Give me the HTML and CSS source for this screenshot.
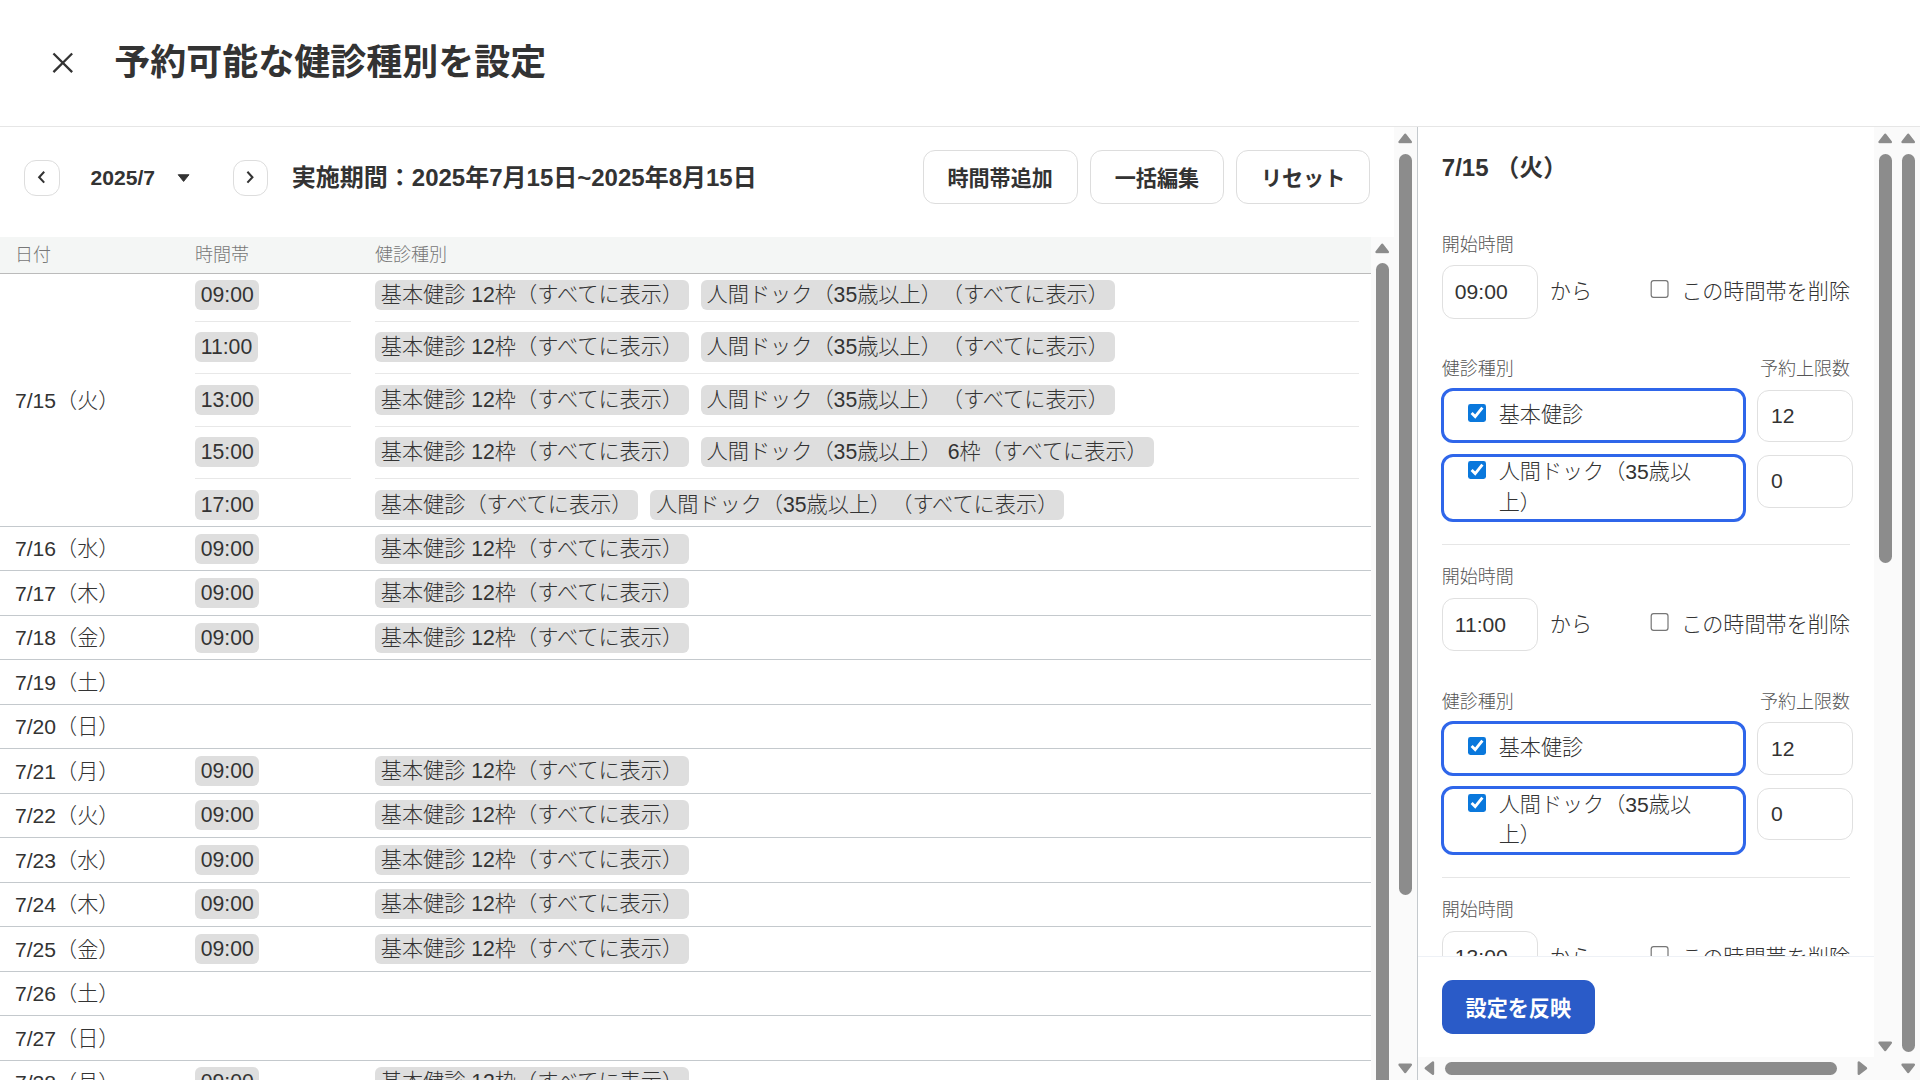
FILE: index.html
```html
<!DOCTYPE html>
<html lang="ja">
<head>
<meta charset="utf-8">
<title>予約可能な健診種別を設定</title>
<link rel="stylesheet" href="styles.css">
</head>
<body>
<svg class="defs" width="0" height="0" aria-hidden="true">
  <symbol id="tri-up" viewBox="0 0 12 9"><path d="M6 1.5 10.7 7.5H1.3Z"/></symbol>
  <symbol id="tri-down" viewBox="0 0 12 9"><path d="M6 7.5 10.7 1.5H1.3Z"/></symbol>
  <symbol id="tri-left" viewBox="0 0 9 12"><path d="M1.5 6 7.5 1.3V10.7Z"/></symbol>
  <symbol id="tri-right" viewBox="0 0 9 12"><path d="M7.5 6 1.5 1.3V10.7Z"/></symbol>
</svg>
<div class="page">
  <header class="top-bar">
    <svg class="close-icon" viewBox="0 0 18 18"><path d="M1.2 1.2 16.8 16.8M16.8 1.2 1.2 16.8"/></svg>
    <h1 class="page-title">予約可能な健診種別を設定</h1>
  </header>
  <div class="body">
    <section class="left">
      <div class="left-main">
        <div class="toolbar">
          <button class="nav-btn" type="button"><svg class="chev" viewBox="0 0 8 12"><path d="M6 1.5 1.8 6 6 10.5"/></svg></button>
          <div class="month"><span>2025/7</span><svg class="caret" viewBox="0 0 11 7"><path d="M1 .6h9L5.5 6.2Z"/></svg></div>
          <button class="nav-btn" type="button"><svg class="chev" viewBox="0 0 8 12"><path d="M2 1.5 6.2 6 2 10.5"/></svg></button>
          <div class="period">実施期間：2025年7月15日~2025年8月15日</div>
          <div class="actions">
            <button class="btn" type="button">時間帯追加</button>
            <button class="btn" type="button">一括編集</button>
            <button class="btn" type="button">リセット</button>
          </div>
        </div>
        <div class="table-wrap">
          <div class="table">
            <div class="thead"><div class="th-date">日付</div><div class="th-time">時間帯</div><div class="th-type">健診種別</div></div>
            <div class="day day-multi">
              <div class="date">7/15（火）</div>
              <div class="slots">
                <div class="slot"><div class="cell"><span class="chip">09:00</span></div><div class="cell"><span class="chip">基本健診 12枠（すべてに表示）</span><span class="chip">人間ドック（35歳以上）（すべてに表示）</span></div></div>
                <div class="slot"><div class="cell"><span class="chip">11:00</span></div><div class="cell"><span class="chip">基本健診 12枠（すべてに表示）</span><span class="chip">人間ドック（35歳以上）（すべてに表示）</span></div></div>
                <div class="slot"><div class="cell"><span class="chip">13:00</span></div><div class="cell"><span class="chip">基本健診 12枠（すべてに表示）</span><span class="chip">人間ドック（35歳以上）（すべてに表示）</span></div></div>
                <div class="slot"><div class="cell"><span class="chip">15:00</span></div><div class="cell"><span class="chip">基本健診 12枠（すべてに表示）</span><span class="chip">人間ドック（35歳以上） 6枠（すべてに表示）</span></div></div>
                <div class="slot"><div class="cell"><span class="chip">17:00</span></div><div class="cell"><span class="chip">基本健診（すべてに表示）</span><span class="chip">人間ドック（35歳以上）（すべてに表示）</span></div></div>
              </div>
            </div>
            <div class="day"><div class="date">7/16（水）</div><div class="time"><span class="chip">09:00</span></div><div class="types"><span class="chip">基本健診 12枠（すべてに表示）</span></div></div>
            <div class="day"><div class="date">7/17（木）</div><div class="time"><span class="chip">09:00</span></div><div class="types"><span class="chip">基本健診 12枠（すべてに表示）</span></div></div>
            <div class="day"><div class="date">7/18（金）</div><div class="time"><span class="chip">09:00</span></div><div class="types"><span class="chip">基本健診 12枠（すべてに表示）</span></div></div>
            <div class="day"><div class="date">7/19（土）</div></div>
            <div class="day"><div class="date">7/20（日）</div></div>
            <div class="day"><div class="date">7/21（月）</div><div class="time"><span class="chip">09:00</span></div><div class="types"><span class="chip">基本健診 12枠（すべてに表示）</span></div></div>
            <div class="day"><div class="date">7/22（火）</div><div class="time"><span class="chip">09:00</span></div><div class="types"><span class="chip">基本健診 12枠（すべてに表示）</span></div></div>
            <div class="day"><div class="date">7/23（水）</div><div class="time"><span class="chip">09:00</span></div><div class="types"><span class="chip">基本健診 12枠（すべてに表示）</span></div></div>
            <div class="day"><div class="date">7/24（木）</div><div class="time"><span class="chip">09:00</span></div><div class="types"><span class="chip">基本健診 12枠（すべてに表示）</span></div></div>
            <div class="day"><div class="date">7/25（金）</div><div class="time"><span class="chip">09:00</span></div><div class="types"><span class="chip">基本健診 12枠（すべてに表示）</span></div></div>
            <div class="day"><div class="date">7/26（土）</div></div>
            <div class="day"><div class="date">7/27（日）</div></div>
            <div class="day"><div class="date">7/28（月）</div><div class="time"><span class="chip">09:00</span></div><div class="types"><span class="chip">基本健診 12枠（すべてに表示）</span></div></div>
          </div>
          <div class="sb sb-table">
            <svg class="tri-v"><use href="#tri-up"/></svg>
            <div class="thumb thumb-table"></div>
          </div>
        </div>
      </div>
      <div class="sb">
        <svg class="tri-v"><use href="#tri-up"/></svg>
        <div class="thumb thumb-left"></div>
        <svg class="tri-v tri-end"><use href="#tri-down"/></svg>
      </div>
    </section>
    <section class="right">
      <div class="right-inner">
        <div class="right-main">
          <div class="right-scroll">
            <div class="sections">
              <h2 class="panel-title">7/15 （火）</h2>
              <div class="slot-form">
                <div class="label">開始時間</div>
                <div class="time-row">
                  <input class="field" type="text" value="09:00">
                  <span class="from">から</span>
                  <label class="delete"><input class="check" type="checkbox"><span>この時間帯を削除</span></label>
                </div>
                <div class="types-head"><span>健診種別</span><span>予約上限数</span></div>
                <div class="type-row">
                  <label class="type-box"><span class="type-inner"><input class="check" type="checkbox" checked><span class="type-name">基本健診</span></span></label>
                  <input class="field num" type="text" value="12">
                </div>
                <div class="type-row">
                  <label class="type-box"><span class="type-inner"><input class="check" type="checkbox" checked><span class="type-name">人間ドック（35歳以上）</span></span></label>
                  <input class="field num" type="text" value="0">
                </div>
              </div>
              <div class="slot-form">
                <div class="label">開始時間</div>
                <div class="time-row">
                  <input class="field" type="text" value="11:00">
                  <span class="from">から</span>
                  <label class="delete"><input class="check" type="checkbox"><span>この時間帯を削除</span></label>
                </div>
                <div class="types-head"><span>健診種別</span><span>予約上限数</span></div>
                <div class="type-row">
                  <label class="type-box"><span class="type-inner"><input class="check" type="checkbox" checked><span class="type-name">基本健診</span></span></label>
                  <input class="field num" type="text" value="12">
                </div>
                <div class="type-row">
                  <label class="type-box"><span class="type-inner"><input class="check" type="checkbox" checked><span class="type-name">人間ドック（35歳以上）</span></span></label>
                  <input class="field num" type="text" value="0">
                </div>
              </div>
              <div class="slot-form">
                <div class="label">開始時間</div>
                <div class="time-row">
                  <input class="field" type="text" value="13:00">
                  <span class="from">から</span>
                  <label class="delete"><input class="check" type="checkbox"><span>この時間帯を削除</span></label>
                </div>
              </div>
            </div>
            <div class="footer"><button class="apply" type="button">設定を反映</button></div>
          </div>
          <div class="sb">
            <svg class="tri-v"><use href="#tri-up"/></svg>
            <div class="thumb thumb-inner"></div>
            <svg class="tri-v tri-end tri-end-inner"><use href="#tri-down"/></svg>
          </div>
        </div>
        <div class="hbar">
          <svg class="tri-h"><use href="#tri-left"/></svg>
          <div class="hthumb"></div>
          <svg class="tri-h tri-h-end"><use href="#tri-right"/></svg>
        </div>
      </div>
      <div class="sb">
        <svg class="tri-v"><use href="#tri-up"/></svg>
        <div class="thumb thumb-outer"></div>
        <svg class="tri-v tri-end"><use href="#tri-down"/></svg>
      </div>
    </section>
  </div>
</div>
</body>
</html>
```

FILE: styles.css
```css
html { zoom: 1.2; }
* { box-sizing: border-box; }
body {
  margin: 0;
  width: 1600px;
  height: 900px;
  overflow: hidden;
  background: #fff;
  color: #333;
  font-family: "Liberation Sans", "Noto Sans CJK JP", sans-serif;
  font-size: 17.6px;
  font-weight: 300;
  text-spacing-trim: space-all;
}
.defs { position: absolute; }
.page { width: 1600px; height: 900px; display: flex; flex-direction: column; overflow: hidden; }

.top-bar { flex: none; height: 106px; display: flex; align-items: center; padding-left: 43.5px; border-bottom: 1px solid #e6e6e6; }
.close-icon { width: 18px; height: 18px; flex: none; fill: none; stroke: #333; stroke-width: 1.9; }
.page-title { margin: 0 0 1px 33.7px; font-size: 30px; line-height: 40px; font-weight: 700; }

.body { flex: 1; display: flex; min-height: 0; }
.left { flex: none; width: 1181px; display: flex; }
.left-main { flex: 1; min-width: 0; display: flex; flex-direction: column; }

.toolbar { flex: none; height: 91.5px; display: flex; align-items: center; padding: 0 20px 9px 20.4px; }
.nav-btn { flex: none; width: 29.4px; height: 30px; margin-top: 1.5px; padding: 0; display: flex; align-items: center; justify-content: center; background: #fff; border: 1px solid #ddd; border-radius: 10px; }
.chev { width: 8px; height: 12px; fill: none; stroke: #333; stroke-width: 1.7; }
.month { flex: none; width: 144px; margin-top: 2px; padding-left: 25.6px; display: flex; align-items: center; font-weight: 700; }
.caret { width: 11px; height: 7px; margin-left: 18.3px; fill: #333; stroke: #333; stroke-width: .8; stroke-linejoin: round; }
.period { margin-left: 20px; margin-bottom: 1.5px; font-size: 20px; font-weight: 700; }
.actions { margin-left: auto; display: flex; gap: 10px; }
.btn { height: 45px; padding: 0 19.9px; background: #fff; border: 1px solid #ddd; border-radius: 10px; color: #333; font: inherit; font-weight: 700; }

.table-wrap { flex: 1; min-height: 0; display: flex; overflow: hidden; }
.table { flex: 1; min-width: 0; overflow: hidden; }
.thead { height: 30.8px; display: flex; align-items: center; padding-bottom: 3px; background: #f4f6f5; border-bottom: 1px solid #bbb; font-size: 15px; color: #777; }
.th-date { width: 162.5px; padding-left: 12.5px; }
.th-time { width: 150px; }

.day { display: flex; align-items: center; height: 37.08px; border-bottom: 1px solid #c4c9cd; }
.date { flex: none; width: 162.5px; padding-left: 12.5px; margin-bottom: 2px; }
.time { flex: none; width: 150px; }
.types { flex: 1; }
.day-multi { height: auto; }
.slots { flex: 1; min-width: 0; padding: 5px 10px 5px 0; }
.slot { display: grid; grid-template-columns: 130px 1fr; column-gap: 20px; }
.cell { padding-top: 8.95px; padding-bottom: 8.95px; border-bottom: 1px solid #e8e8e8; display: flex; gap: 10px; }
.slot:first-child .cell { padding-top: 0; }
.slot:last-child .cell { padding-bottom: 0; border-bottom: 0; }
.chip { display: inline-block; height: 25px; line-height: 25px; padding: 0 4.8px; background: #dedede; border-radius: 5px; white-space: nowrap; font-size: 17.65px; }

.sb { flex: none; width: 19.17px; display: flex; flex-direction: column; align-items: center; background: #fafafa; overflow: hidden; }
.tri-v { flex: none; width: 12px; height: 9px; margin-top: 4.8px; fill: #8c8c8c; stroke: #8c8c8c; stroke-width: 2; stroke-linejoin: round; }
.tri-end { margin-top: auto; margin-bottom: 4.8px; }
.tri-end-inner { margin-bottom: 4px; }
.thumb { flex: none; width: 10.8px; margin-top: 8.3px; background: #8c8c8c; border-radius: 6px; }
.thumb-left { height: 617.5px; }
.thumb-outer { height: 748.3px; }
.thumb-inner { height: 340.8px; }
.thumb-table { height: 800px; }

.right { flex: 1; min-width: 0; display: flex; border-left: 1px solid #c4c9cd; }
.right-inner { flex: 1; min-width: 0; display: flex; flex-direction: column; }
.right-main { flex: 1; min-height: 0; display: flex; }
.right-scroll { flex: 1; min-width: 0; display: flex; flex-direction: column; }
.sections { flex: 1; min-height: 0; overflow: hidden; padding: 0 20px 0 19.7px; }
.panel-title { margin: 20px 0 23.1px; font-size: 20px; line-height: 28px; font-weight: 700; }
.slot-form { padding: 17.1px 0 18.5px; border-bottom: 1px solid #e6e6e6; }
.panel-title + .slot-form { padding-top: 16.7px; }
.label { font-size: 15px; line-height: 21px; margin-bottom: 6px; color: #555; }
.time-row { display: flex; align-items: center; height: 44.7px; }
.field { flex: none; width: 80px; height: 44.7px; padding: 0 10px; background: #fff; border: 1px solid #e0e0e0; border-radius: 10px; color: #333; font-family: inherit; font-size: 17.6px; font-weight: 400; outline: 0; }
.from { margin-left: 10px; margin-bottom: 2.5px; }
.delete { margin-left: auto; margin-bottom: 2.5px; display: flex; align-items: center; gap: 9.6px; }
.check { flex: none; width: 16px; height: 16px; margin: 0; accent-color: #0a78dc; }
.delete .check { margin-top: -1px; }
.types-head { display: flex; justify-content: space-between; margin-top: 32px; margin-bottom: 5.1px; font-size: 15px; line-height: 21px; color: #555; }
.type-row { display: flex; align-items: flex-start; gap: 9px; margin: 0 -2.3px 8.6px -1px; }
.type-row:last-child { margin-bottom: 0; }
.type-box { flex: 1; min-width: 0; min-height: 45.8px; display: flex; padding: 0.5px 23.5px 0.5px 20.4px; border: 2.5px solid #2f66ea; border-radius: 10px; }
.type-inner { margin: auto 0; display: flex; align-items: flex-start; gap: 9.5px; }
.type-inner .check { margin-top: 3.1px; }
.type-name { line-height: 25.4px; }
.num { height: 44px; margin-top: 1.1px; padding-left: 11px; }

.footer { flex: none; height: 84.1px; padding: 19.2px 0 0 19.7px; background: #fff; border-top: 1px solid #eef1f6; }
.apply { display: block; width: 127.5px; height: 45px; padding: 0; background: #2a5bc8; border: 0; border-radius: 9px; color: #fff; font: inherit; font-weight: 700; }

.hbar { flex: none; height: 19.17px; display: flex; align-items: center; padding-left: 4.67px; background: #fafafa; }
.tri-h { flex: none; width: 9px; height: 12px; fill: #8c8c8c; stroke: #8c8c8c; stroke-width: 2; stroke-linejoin: round; }
.tri-h-end { margin-left: 16.7px; }
.hthumb { flex: none; width: 326.7px; height: 10.8px; margin-left: 8.5px; background: #8c8c8c; border-radius: 6px; }
```
